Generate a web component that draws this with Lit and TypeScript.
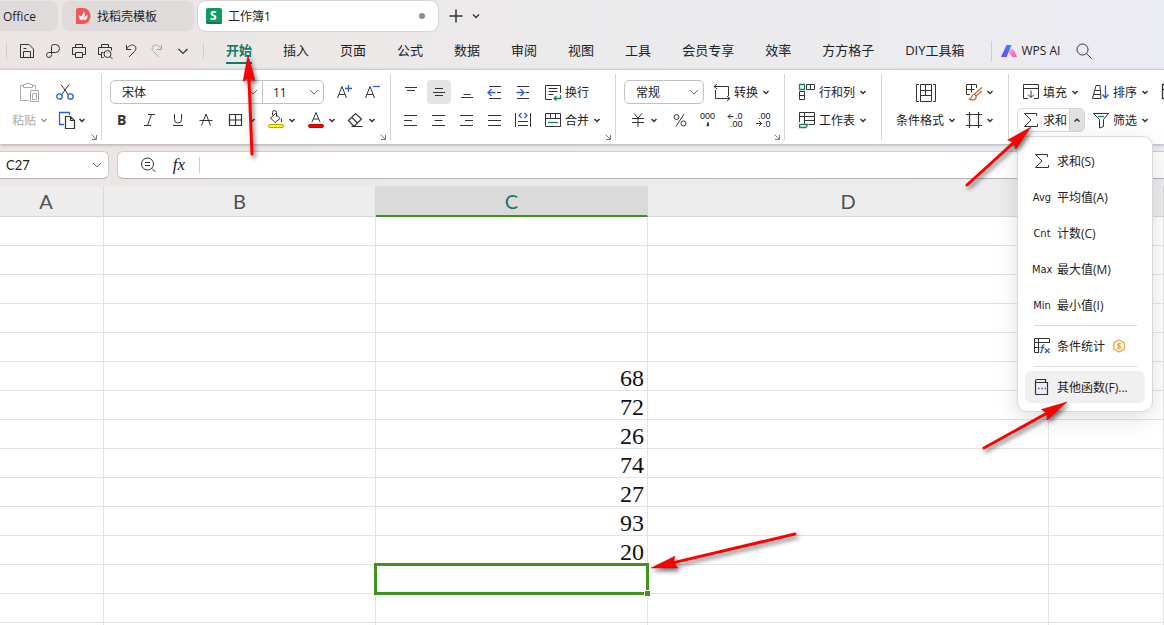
import { LitElement, html, css, svg, nothing, type SVGTemplateResult, type TemplateResult } from "lit";
import { customElement, property } from "lit/decorators.js";
import { classMap } from "lit/directives/class-map.js";

const K = "#333";
const BLUE = "#2b5fdc";
const GREEN = "#16845f";

const ICONS: Record<string, SVGTemplateResult> = {
  save: svg`<path d="M3.500 3.500h8.500l4.500 4.500v8.500h-13z M6.500 16.500v-6h7v6 M6.500 7.500h3"/>`,
  share: svg`<path d="M8.500 13.500V5.500a2 2 0 0 1 2-2h2a3.500 3.500 0 0 1 0 8H5.500a2.500 2.500 0 1 0 3 2.500"/>`,
  print: svg`<path d="M6.500 6.500v-3h7v3 M6.500 13.500h-3v-7h13v7h-3 M6.500 11.500h7v5h-7z"/>`,
  preview: svg`<path d="M6.500 6.500v-3h7v3 M6 13.500h-2.500v-7h13v3 M6.500 11.500h2 M6.500 11.500v5h2"/><circle cx="12.500" cy="13" r="3.500"/><path d="M15 15.500l2.500 2.500"/>`,
  undo: svg`<path d="M5.500 4v4.500H10 M5.500 8.500C7 5 10 3.500 12.500 4.200C15.500 5.200 15.500 8.500 13.500 10.500L8 16"/>`,
  redo: svg`<path stroke="#aaa" d="M14.500 4v4.500H10 M14.500 8.500C13 5 10 3.500 7.500 4.200C4.500 5.200 4.500 8.500 6.500 10.500L12 16"/>`,
  more: svg`<path stroke-width="1.200" d="M5.500 8l4.500 4.500L14.500 8"/>`,
  search: svg`<circle cx="8.500" cy="8.500" r="5.500"/><path d="M12.500 12.500l5 5"/>`,
  paste: svg`<g stroke="#aaa"><path d="M9 18.500H.5V3.500H3.500 M12.500 3.500h3V7"/><path d="M3.500 5.500v-3h2.500v-1h4v1h2.500v3z"/><path d="M10.500 8.500h8v11h-8z M12.500 11.500h4v6h-4z"/></g>`,
  cut: svg`<path d="M5 2.500l7.500 10.500M13 2.500L5.500 13"/><g stroke="${BLUE}" stroke-width="1.300"><circle cx="3.500" cy="14.500" r="2.700"/><circle cx="14.500" cy="14.500" r="2.700"/></g>`,
  copy: svg`<path stroke="${BLUE}" stroke-width="1.300" d="M8 14.500H3.500V2.500h10V5"/><path stroke-width="1.200" d="M9.500 6.500h5l4 4v8h-9z M14.500 6.500v4h4"/>`,
  grow: svg`<path d="M3.500 16L8 4.500 12.500 16M5 12.500h6"/><path stroke="${BLUE}" stroke-width="1.300" d="M11 6.500h7M14.500 3v7"/>`,
  shrink: svg`<path d="M3.500 16L8 4.500 12.500 16M5 12.500h6"/><path stroke="${BLUE}" stroke-width="1.300" d="M11 4.500h7"/>`,
  bold: svg`<text x="5" y="15" font-size="14" font-weight="700">B</text>`,
  italic: svg`<path d="M8 4.500h7M4 15.500h7M11.500 4.500l-4 11"/>`,
  underline: svg`<path d="M6.500 4v5.500a3.500 3.500 0 0 0 7 0V4M5 15.500h10"/>`,
  strike: svg`<path d="M5.500 15.500L10 4l4.500 11.500M3.500 10.500h13"/>`,
  borders: svg`<path stroke-width="1.200" d="M3.500 4.500h12v11h-12zM9.500 4.500v11M3.500 10h12"/>`,
  bucket: svg`<path d="M9.500 3.500l4.500 5-5 4-4.500-4.500zM6.500 5V2.500a2 2 0 0 1 4 0v4M15.500 8.500v3.500"/><rect x="2.500" y="14.500" width="15" height="3" rx="1.500" fill="#ff0" stroke="#b5a900"/>`,
  color: svg`<path d="M6 12l4-9.500 4 9.500M7.500 9h5"/><rect x="2.500" y="14.500" width="15" height="3" rx="1.500" fill="#f00" stroke="#c80000"/>`,
  eraser: svg`<path stroke-width="1.200" d="M2.500 10.500l7-7 6 5.500-6.500 6.500H7zM6 7.500l5.500 5.500M5.500 16.500h11"/>`,
  top: svg`<path d="M4 5.500h12M6 8.500h8"/>`,
  middle: svg`<path d="M6 6.500h8M4 10.500h12M6 13.500h8"/>`,
  bottom: svg`<path d="M6.500 12.500h7M4 15.500h12"/>`,
  outdent: svg`<path d="M4 4.500h12M4 16.500h12M12 10.500h4"/><path stroke="${BLUE}" stroke-width="1.300" d="M3 10.500h7.500M6.500 7l-3.500 3.500 3.500 3.500"/>`,
  indent: svg`<path d="M4 4.500h12M4 16.500h12M12.500 10.500h3.500"/><path stroke="${BLUE}" stroke-width="1.300" d="M3.500 10.500H11M7.500 7l3.500 3.500-3.500 3.500"/>`,
  left: svg`<path d="M3 5.500h13M3 10.500h8M3 15.500h13"/>`,
  center: svg`<path d="M3 5.500h13M5.500 10.500h8M3 15.500h13"/>`,
  right: svg`<path d="M3 5.500h13M8 10.500h8M3 15.500h13"/>`,
  justify: svg`<path d="M3 5.500h13M3 10.500h13M3 15.500h13"/>`,
  distribute: svg`<path d="M2.500 3v14M17.500 3v14M5 11.500h10M5 15.500h10"/><path stroke="${BLUE}" stroke-width="1.300" d="M8.500 3L6 5.500 8.500 8M11.500 3L14 5.500 11.500 8"/>`,
  wrap: svg`<path d="M17.500 11V3.500h-15v14H9M5.500 6.500h9M5.500 9.500h9M5.500 12.500h5"/><path stroke="${GREEN}" stroke-width="1.300" d="M17.500 13v3.500h-6M13.500 14l-2.500 2.500 2.500 2"/>`,
  merge: svg`<path d="M2.500 3.500h15v13h-15zM2.500 8.500h15M7.500 3.500v5M12.500 3.500v5"/><path stroke="${GREEN}" stroke-width="1.300" d="M5 12.500h10"/>`,
  convert: svg`<path d="M5 2L2 4.500 5 7M2 4.500h14.500V14M15 14l3 2.500-3 2.500M18 16.500H3.500V8"/>`,
  yen: svg`<path d="M6 3.500l4 4.500 4-4.500M4 8.500h12M4 12.500h12M10 8v9"/>`,
  percent: svg`<circle cx="6.500" cy="7" r="2.500"/><circle cx="13.500" cy="13.500" r="2.500"/><path d="M14 4L6 16.500"/>`,
  thousands: svg`<g class="mini"><text x="2" y="9" font-size="9">000</text></g><path stroke-width="2" d="M10 12.500v2.500l-1 1"/>`,
  lessDec: svg`<path d="M2 6.500h5.500M4.500 4L2 6.500 4.500 9"/><g class="mini"><text x="9" y="9" font-size="9">.0</text><text x="4" y="17" font-size="9">.00</text></g>`,
  moreDec: svg`<path d="M2 13.500h5.500M5 11l2.500 2.500L5 16"/><g class="mini"><text x="4" y="9" font-size="9">.00</text><text x="9" y="17" font-size="9">.0</text></g>`,
  rowcol: svg`<path d="M9.500 2.500h8v5h-8zM13.500 2.500v5M2.500 9.500h5v8h-5zM2.500 13.500h5"/><path stroke="${GREEN}" stroke-width="1.300" d="M2.500 2.500h5v5h-5z"/>`,
  sheet: svg`<path d="M2.500 12V2.500h15v12H12M2.500 6.500h15M7.500 2.500v12M7.500 10.500h10"/><path stroke="${GREEN}" stroke-width="1.300" d="M2.500 14.500h8l-1.500 3H2.500z"/>`,
  condition: svg`<path d="M3 2.500H.5v17H3M17 2.500h2.500v17H17M4.500 2.500h11v17h-11zM4.500 8.500h11M4.500 13.500h11M9.500 2.500v6M9.500 13.500v-5"/>`,
  style: svg`<path d="M12.500 6V2.500h-10v10H6M2.500 7.500h8M7.500 2.500v8"/><path stroke="#c8602b" stroke-width="1.200" d="M18 5.500l-7.500 6.500 1.500 2 6-5M10.500 12c-3 0-2.500 4-5 5.500 4 .8 7.500 0 6.500-3.500"/>`,
  frame: svg`<path stroke-width="1.200" d="M5.500 2v16M14.500 2v16M2 4.500h16M2 15.500h16"/>`,
  fill: svg`<path d="M7 16.500H2.500v-14h15v14H13M2.500 6.500h15M10 8.500v7M7 12.500l3 3 3-3"/>`,
  sort: svg`<path d="M5 3.500h4l1 13H1.500zM4 8.500h5M3 12.500h6.500"/><path stroke="${BLUE}" stroke-width="1.300" d="M14.500 3.500v12M11.500 12.500l3 3.500 3-3.500"/>`,
  sum: svg`<path d="M15.500 6V3.500H3.500l6.500 6.500-6.500 6.500h13V14"/>`,
  filter: svg`<path d="M2.500 3.500h15l-5 6v7l-4 1.500V9.500z"/><path stroke="${GREEN}" stroke-width="1.300" d="M7 6.500h6"/>`,
  freeze: svg`<path stroke-width="1.300" d="M1.500 2.500h15v14h-15zM1.500 7.500h15M6.500 2.500v14"/>`,
  stat: svg`<path d="M7 16.500H2.500v-14h15V7M2.500 6.500h15M6.500 2.500v14M2.500 11.500h5"/><g stroke="${BLUE}" stroke-width="1.300"><path d="M12.500 9c-2-.5-2 1-2.200 3s-.3 5-2.300 4.500M8.500 11.500h4M13 12.500l4.500 4.500M17.500 12.500L13 17"/></g>`,
  other: svg`<path stroke-width="1.200" d="M3.500 4.500v12a1 1 0 0 0 1 1h11v-12h-12v-1.500a1.500 1.500 0 0 1 1.500-1.500h8.500v3"/><path stroke="${BLUE}" stroke-width="1.500" stroke-dasharray="1.500 1.800" d="M6 11.500h8"/>`,
  formula: svg`<circle cx="8.500" cy="9" r="6"/><path d="M13 13.500l3.500 3.500M6 7.500h5M6 10.500h5"/>`,
};

const icon = (name: string) => svg`<svg class="icon" viewBox="0 0 20 20" width="20" height="20" aria-hidden="true" fill="none" stroke="${K}">${ICONS[name]}</svg>`;
const caret = (up = false) => html`<svg class="caret" viewBox="0 0 12 12" width="12" height="12" aria-hidden="true" fill="none" stroke=${K} stroke-width="1.500">
  <path d=${up ? "M3.500 7.500L6 5.200l2.500 2.300" : "M3.500 5l2.500 2.500L8.500 5"} /></svg>`;
const wideCaret = html`<svg class="wide" viewBox="0 0 12 12" width="12" height="12" aria-hidden="true" fill="none" stroke="#666"><path d="M2 4L6 8 10 4" /></svg>`;

const shared = css`
  * { box-sizing: border-box; }
  button, input, select { font: inherit; color: inherit; background: none; border: 0; margin: 0; padding: 0; outline: 0; }
  button { cursor: pointer; white-space: nowrap; }
  svg { display: block; flex: none; }
  svg text { fill: #333; stroke: none; font-family: "Open Sans", sans-serif; }
  .mini text { font-family: "Liberation Sans", sans-serif; fill: #111; }
`;

@customElement("title-tabs")
export class TitleTabs extends LitElement {
  static styles = [shared, css`
    :host { display: flex; align-items: center; height: 32px; gap: 4px; }
    .tab { display: flex; align-items: center; gap: 6px; height: 30px; width: 132px; padding: 0 13px; border-radius: 8px; background: #dfdbda; font-size: 12px; }
    .first { width: 58px; padding: 0 3px; border-radius: 0 8px 8px 0; }
    .active { width: 240px; padding: 0 13px 0 8px; background: #fff; box-shadow: 0 0 1px 1px #d4d2d2; }
    .name { flex: 1; text-align: left; }
    .dot { width: 6px; height: 6px; border-radius: 50%; background: #8c8c8c; }
    .tools { display: flex; align-items: center; padding-left: 4px; }
  `];
  render() {
    return html`
      <button class="tab first"><span class="name">Office</span></button>
      <button class="tab">
        <svg viewBox="0 0 16 16" width="16" height="16"><path fill="#f2555a" d="M1 2a2 2 0 0 1 2-2h5a7.500 8 0 0 1 0 16H1z" /><path fill="#fff" d="M9 3l1 4-2 5-1.500-3.500zM3.500 7l3 1.500 1 4C5 12 3.500 10 3.500 7zM12.500 6.500c.5 3.500-1 5.500-4 6l1-3.500z" /></svg>
        <span class="name">找稻壳模板</span>
      </button>
      <button class="tab active">
        <svg viewBox="0 0 16 16" width="16" height="16"><rect width="16" height="16" rx="2" fill="#119b63" /><path fill="#0b7a4c" d="M0 14h16a2 2 0 0 1-2 2H2a2 2 0 0 1-2-2z" /><text x="4" y="12" font-size="12" font-weight="700" style="fill:#fff">S</text></svg>
        <span class="name">工作簿1</span><span class="dot"></span>
      </button>
      <div class="tools">
        <button aria-label="新建"><svg viewBox="0 0 20 20" width="20" height="20" stroke="#333" stroke-width="1.500"><path d="M3.500 10h13M10 3.500v13" /></svg></button>
        <button aria-label="更多"><svg viewBox="0 0 20 20" width="20" height="20" fill="none" stroke="#333" stroke-width="1.400"><path d="M7 8.500l3 3 3-3" /></svg></button>
      </div>`;
  }
}

@customElement("menu-bar")
export class MenuBar extends LitElement {
  static styles = [shared, css`
    :host { display: flex; align-items: center; height: 37px; font-size: 13px; white-space: nowrap; }
    .quick { display: flex; align-items: center; padding-left: 6px; }
    .quick button { width: 26px; display: grid; place-items: center; }
    .line { width: 1px; height: 20px; background: #cfcccc; }
    .quick .line:first-child { margin-right: 7px; height: 16px; }
    .quick .line:last-child { margin-left: 7px; height: 16px; }
    nav { display: flex; gap: 31px; padding: 0 26px 0 22px; }
    a { color: inherit; text-decoration: none; line-height: 24px; border-bottom: 2px solid transparent; }
    .on { color: #0b7b6b; font-weight: 700; border-color: #0b7b6b; }
    .ai { display: flex; align-items: center; gap: 5px; padding: 0 14px 0 9px; font-size: 12px; }
  `];
  render() {
    const tabs = ["开始", "插入", "页面", "公式", "数据", "审阅", "视图", "工具", "会员专享", "效率", "方方格子", "DIY工具箱"];
    return html`
      <div class="quick"><span class="line"></span>
        ${[["save", "保存"], ["share", "输出"], ["print", "打印"], ["preview", "打印预览"], ["undo", "撤消"], ["redo", "恢复"], ["more", "更多"]].map(([n, l]) => html`<button aria-label=${l}>${icon(n)}</button>`)}
        <span class="line"></span></div>
      <nav>${tabs.map((t, i) => html`<a href="#" class=${classMap({ on: i === 0 })}>${t}</a>`)}</nav>
      <span class="line"></span>
      <button class="ai"><svg viewBox="0 0 16 12" width="16" height="12">
        <defs><linearGradient id="l" x1="0" y1="1" x2="1" y2="0"><stop offset="0" stop-color="#7a3cf5" /><stop offset="1" stop-color="#2b8cff" /></linearGradient>
        <linearGradient id="r" x1="0" y1="0" x2="1" y2="1"><stop offset="0" stop-color="#f0a0f0" /><stop offset="1" stop-color="#ff4fa0" /></linearGradient></defs>
        <path fill="url(#r)" d="M8.500 4.500h4L16 12h-4.500L8 8z" /><path fill="url(#l)" d="M5.500 0h5L5.500 12H0z" /></svg>WPS AI</button>
      <button aria-label="搜索">${icon("search")}</button>`;
  }
}

@customElement("tool-ribbon")
export class ToolRibbon extends LitElement {
  static styles = [shared, css`
    :host { display: flex; padding: 4px 0; background: #fff; border-top: 1px solid #cfcfd0; box-shadow: 0 1px 3px #0004; font-size: 12px; position: relative; z-index: 2; }
    .group { flex: none; padding: 6px 0 0 8px; border-right: 1px solid #d6d6d6; height: 66px; }
    .row { display: flex; gap: 4px; height: 24px; margin-bottom: 4px; }
    .row:nth-child(2) { margin-bottom: 2px; }
    .font { width: 289px; } .align { width: 225px; } .number { width: 169px; } .cells { width: 97px; }
    .b { display: flex; align-items: center; height: 24px; padding: 0 4px; }
    .i { display: grid; place-items: center; width: 24px; height: 24px; border-radius: 4px; }
    .i.on { background: #e4e4e4; }
    .t { margin: 0 2px; }
    .splits { display: flex; }
    .clip { width: 102px; padding-left: 10px; }
    .clip .row { display: grid; grid-template-columns: 40px 32px; gap: 6px; justify-items: start; }
    .clip .row > :first-child { justify-self: center; }
    .clip .b, .format .b { padding: 0; }
    .clip .off { color: #aaa; }
    .clip .off .caret { opacity: .5; }
    .format { width: 127px; padding-left: 10px; }
    .format .row { display: grid; grid-template-columns: 68px 32px; gap: 4px; justify-items: center; }
    .tail { flex: 1; min-width: 0; border: 0; }
    .tail .row { gap: 2px; }
    .launch { display: block; margin: 0 4px 0 auto; height: 6px; }
    .box { display: flex; border: 1px solid #c2c2c2; border-radius: 5px; height: 24px; }
    .field { display: grid; align-items: center; }
    .field > * { grid-area: 1 / 1; }
    .field + .field { border-left: 1px solid #c2c2c2; }
    .field select { appearance: none; width: 100%; height: 22px; padding-left: 11px; }
    .field:last-child:not(:first-child) select { padding-left: 10px; }
    .field .wide { justify-self: end; margin-right: 3px; pointer-events: none; }
    .family { width: 151px; } .size { width: 61px; } .kind { width: 78px; }
    .holder { position: relative; }
    .sum { display: flex; width: 68px; height: 24px; border: 1px solid #d8d8d8; border-radius: 5px; overflow: hidden; }
    .sum .main { display: flex; align-items: center; padding-left: 3px; }
    .sum .drop { flex: 1; background: #e0e0e0; border-left: 1px solid #d0d0d0; display: grid; place-items: center; }
    .pop { position: absolute; top: 28px; left: 0; width: 136px; padding: 8px 7px; display: grid; gap: 4px; background: #fff; border: 1px solid #d8d8d8; border-radius: 10px; box-shadow: 0 6px 22px #0002; }
    .item { display: flex; align-items: center; height: 32px; padding-left: 7px; border-radius: 6px; }
    .item.on { background: #f0f0f0; }
    .abbr { width: 20px; text-align: center; font: 11px "Liberation Sans Narrow", "DejaVu Sans Condensed", sans-serif; }
    .item .label { padding: 0 7px 0 5px; }
    hr { width: 103px; margin: 0 auto; border: 0; height: 1px; background: #dcdcdc; }
  `];

  private one(name: string, on = false) {
    return html`<button class=${classMap({ i: true, on })} aria-label=${name}>${icon(name)}</button>`;
  }
  private btn(name: string, label = "", drop = true) {
    return html`<button class="b" aria-label=${label || name}>${name ? icon(name) : nothing}${label ? html`<span class="t">${label}</span>` : nothing}${drop ? caret() : nothing}</button>`;
  }
  private launch() {
    return html`<button class="launch" aria-label="更多设置"><svg viewBox="0 0 6 6" width="6" height="6" stroke="#777" fill="none"><path d="M.5 .5l4.500 4.500M1 5.500h4.500V1" /></svg></button>`;
  }
  private field(cls: string, label: string, value: string) {
    return html`<div class="field ${cls}"><select aria-label=${label}><option>${value}</option></select>${wideCaret}</div>`;
  }
  private item(lead: TemplateResult | SVGTemplateResult, label: string, extra: unknown = nothing, on = false) {
    return html`<button role="menuitem" class=${classMap({ item: true, on })}>${lead}<span class="label">${label}</span>${extra}</button>`;
  }

  render() {
    const abbr = (s: string) => html`<span class="abbr">${s}</span>`;
    const coin = html`<svg viewBox="0 0 14 14" width="14" height="14" fill="none" stroke="#f0a840" stroke-width="1.300"><path d="M7 1l5.300 3v6L7 13l-5.300-3V4z" /><path d="M9 5C7.500 4 5.500 4.500 5.500 5.700S9 7 8.800 8.500 6 9.800 5 8.800M7 3.500v7" /></svg>`;
    return html`
      <section class="group clip">
        <div class="row">${this.btn("paste", "", false)}${this.btn("cut", "", false)}</div>
        <div class="row"><button class="b off"><span class="t">粘贴</span>${caret()}</button>${this.btn("copy")}</div>
        ${this.launch()}
      </section>
      <section class="group font">
        <div class="row"><div class="box">${this.field("family", "字体", "宋体")}${this.field("size", "字号", "11")}</div>
          <div class="splits"></div>${this.one("grow")}${this.one("shrink")}</div>
        <div class="row">${["bold", "italic", "underline", "strike"].map((n) => this.one(n))}
          <div class="splits">${["borders", "bucket", "color", "eraser"].map((n) => this.btn(n))}</div></div>
        ${this.launch()}
      </section>
      <section class="group align">
        <div class="row">${["top", "middle", "bottom", "outdent", "indent"].map((n) => this.one(n, n === "middle"))}${this.btn("wrap", "换行", false)}</div>
        <div class="row">${["left", "center", "right", "justify", "distribute"].map((n) => this.one(n))}${this.btn("merge", "合并")}</div>
        ${this.launch()}
      </section>
      <section class="group number">
        <div class="row"><div class="box">${this.field("kind", "数字格式", "常规")}</div>${this.btn("convert", "转换")}</div>
        <div class="row">${this.btn("yen")}${["percent", "thousands", "lessDec", "moreDec"].map((n) => this.one(n))}</div>
        ${this.launch()}
      </section>
      <section class="group cells">
        <div class="row">${this.btn("rowcol", "行和列")}</div>
        <div class="row">${this.btn("sheet", "工作表")}</div>
      </section>
      <section class="group format">
        <div class="row">${this.btn("condition", "", false)}${this.btn("style")}</div>
        <div class="row">${this.btn("", "条件格式")}${this.btn("frame")}</div>
      </section>
      <section class="group tail">
        <div class="row">${this.btn("fill", "填充")}${this.btn("sort", "排序")}${this.btn("freeze")}</div>
        <div class="row">
          <div class="holder">
            <div class="sum"><button class="main">${icon("sum")}<span class="t">求和</span></button><button class="drop" aria-label="求和选项">${caret(true)}</button></div>
            <div class="pop" role="menu">
              ${this.item(icon("sum"), "求和(S)")}
              ${this.item(abbr("Avg"), "平均值(A)")}
              ${this.item(abbr("Cnt"), "计数(C)")}
              ${this.item(abbr("Max"), "最大值(M)")}
              ${this.item(abbr("Min"), "最小值(I)")}
              <hr />
              ${this.item(icon("stat"), "条件统计", coin)}
              <hr />
              ${this.item(icon("other"), "其他函数(F)...", nothing, true)}
            </div>
          </div>
          ${this.btn("filter", "筛选")}
        </div>
      </section>`;
  }
}

@customElement("formula-bar")
export class FormulaBar extends LitElement {
  static styles = [shared, css`
    :host { display: flex; gap: 8px; padding: 7px 0; font: 13px Lato, sans-serif; }
    .box { display: flex; align-items: center; height: 28px; background: #fff; border: 1px solid #cfcccc; border-bottom-color: #b4b2b2; border-radius: 6px; }
    .name { width: 109px; border-left: 0; border-radius: 0 6px 6px 0; padding: 0 5px 0 6px; }
    .name input { flex: 1; min-width: 0; }
    .entry { flex: 1; border-right: 0; border-radius: 6px 0 0 6px; padding-left: 21px; }
    .fx { width: 40px; font: italic 17px "Liberation Serif", serif; }
    .line { width: 1px; height: 16px; background: #ccc; }
    .entry input { flex: 1; padding-left: 6px; }
  `];
  render() {
    return html`
      <div class="box name"><input aria-label="名称框" value="C27" />${wideCaret}</div>
      <div class="box entry"><button aria-label="查看公式">${icon("formula")}</button><button class="fx">fx</button><span class="line"></span><input aria-label="编辑栏" /></div>`;
  }
}

@customElement("sheet-grid")
export class SheetGrid extends LitElement {
  @property({ attribute: false }) rows: string[] = [];
  static styles = [shared, css`
    :host { display: block; background: #fff; }
    table { width: calc(100% + 11px); margin-left: -11px; table-layout: fixed; border-collapse: separate; border-spacing: 0; }
    .ca { width: 115px; } .cb, .cc { width: 272px; } .cd { width: 401px; }
    th { height: 31px; padding: 0; background: #ededed; border-right: 1px solid #dadada; border-bottom: 1px solid #d6d6d6; font: 20px/28px Lato, sans-serif; color: #505050; }
    th.on { background: #dadada; color: #0b7b6b; border-bottom: 2px solid #43911f; border-right-color: #dadada; }
    td { height: 29px; padding: 4px 3px 0 0; border-right: 1px solid #e3e3e3; border-bottom: 1px solid #e3e3e3; text-align: right; font: 24px/24px "Liberation Serif", serif; color: #111; }
    td.sel { position: relative; }
    .ring { position: absolute; inset: -2px; border: 3px solid #43911f; }
    .grip { position: absolute; right: -4px; bottom: -4px; width: 7px; height: 7px; background: #43911f; border: 1px solid #fff; }
  `];
  render() {
    return html`<table>
      <colgroup><col class="ca" /><col class="cb" /><col class="cc" /><col class="cd" /><col /></colgroup>
      <thead><tr>${["A", "B", "C", "D", ""].map((c) => html`<th class=${classMap({ on: c === "C" })}>${c}</th>`)}</tr></thead>
      <tbody>${this.rows.map((v, i) => html`<tr><td></td><td></td>
        ${i === 12 ? html`<td class="sel"><div class="ring"></div><div class="grip"></div></td>` : html`<td>${v}</td>`}
        <td></td><td></td></tr>`)}</tbody>
    </table>`;
  }
}

type Pt = [number, number];

@customElement("app-root")
export class AppRoot extends LitElement {
  static styles = [shared, css`
    :host { display: block; position: relative; height: 100vh; overflow: hidden; color: #222; font-family: "Open Sans", "Noto Sans CJK SC", sans-serif;
      background: linear-gradient(90deg, #ebe5e3, #ece8e8 30%, #ebebed 55%, #ebecf2); }
    .marks { position: absolute; inset: 0; width: 100%; height: 100%; z-index: 5; pointer-events: none; filter: drop-shadow(2px 3px 2px #0008); }
  `];

  private arrow([x0, y0]: Pt, [x1, y1]: Pt) {
    const len = Math.hypot(x1 - x0, y1 - y0);
    const ux = (x1 - x0) / len;
    const uy = (y1 - y0) / len;
    const at = (back: number, side: number) => `${(x1 - ux * back - uy * side).toFixed(1)},${(y1 - uy * back + ux * side).toFixed(1)}`;
    return svg`<line x1=${x0} y1=${y0} x2=${x1 - ux * 20} y2=${y1 - uy * 20} stroke="#f00" stroke-width="3" stroke-linecap="round"/>
      <polygon points="${at(0, 0)} ${at(26, 6)} ${at(23, 0)} ${at(26, -6)}" fill="#f00" stroke="#b00" stroke-width=".5"/>`;
  }

  render() {
    const rows = ["", "", "", "", "", "68", "72", "26", "74", "27", "93", "20", "", "", ""];
    return html`
      <title-tabs></title-tabs>
      <menu-bar></menu-bar>
      <tool-ribbon></tool-ribbon>
      <formula-bar></formula-bar>
      <sheet-grid .rows=${rows}></sheet-grid>
      <svg class="marks" aria-hidden="true">
        ${this.arrow([252, 154], [248, 55])}
        ${this.arrow([967, 185], [1031, 127])}
        ${this.arrow([984, 448], [1067, 402])}
        ${this.arrow([795, 534], [651, 568])}
      </svg>`;
  }
}
